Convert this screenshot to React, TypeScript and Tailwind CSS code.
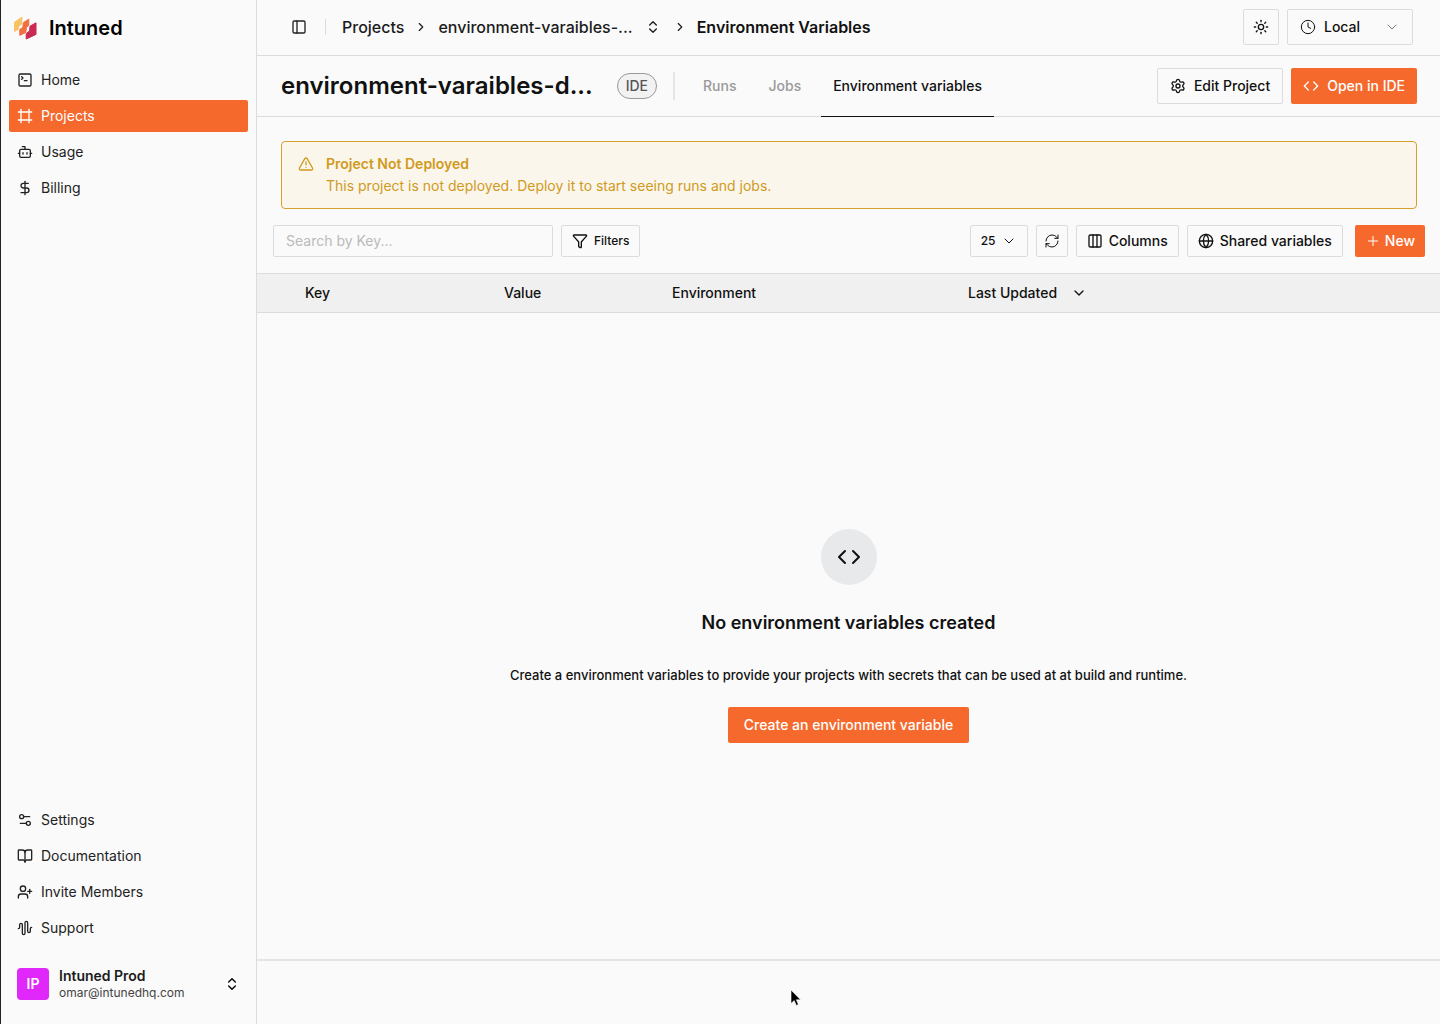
import { useState } from "react";
import {
    AudioWaveform,
    BookOpen,
    Bot,
    ChevronDown,
    ChevronRight,
    ChevronsUpDown,
    Clock,
    Code,
    Columns3,
    DollarSign,
    Frame,
    Funnel,
    Globe,
    LucideIcon,
    PanelLeft,
    Plus,
    RefreshCw,
    Settings,
    Settings2,
    SquareTerminal,
    Sun,
    TriangleAlert,
    UserPlus,
} from "lucide-react";

interface NavLink {
    label: string
    icon: LucideIcon
}

const mainLinks: NavLink[] = [
    { label: 'Home', icon: SquareTerminal },
    { label: 'Projects', icon: Frame },
    { label: 'Usage', icon: Bot },
    { label: 'Billing', icon: DollarSign },
];

const footerLinks: NavLink[] = [
    { label: 'Settings', icon: Settings2 },
    { label: 'Documentation', icon: BookOpen },
    { label: 'Invite Members', icon: UserPlus },
    { label: 'Support', icon: AudioWaveform },
];

const tabs = ['Runs', 'Jobs', 'Environment variables'];

const outlineButton = "flex items-center justify-center rounded-xs border border-[#dcdcdc] font-medium text-[#111111]";
const primaryButton = "flex items-center justify-center rounded-xs bg-[#f5692c] text-sm font-medium text-white";

function Logo() {
    return (
        <svg width="24" height="24" viewBox="0 0 24 24" strokeWidth="1" strokeLinejoin="round">
            <path d="M1.5 6.2 9 1.2 8.6 8.2 5.6 10.2 5.2 13.4 1.5 15.4Z" fill="#f9c263" stroke="#f9c263" />
            <path d="M10.4 6.6 15.8 3.2V9.4L13.4 11.4 12.8 16.4 6.8 19.4V13.4L9.8 11.4Z" fill="#f2703f" stroke="#f2703f" />
            <path d="M17 10.2 23 6.8V18.4L13.2 23V17.6L16.6 15Z" fill="#cb2853" stroke="#cb2853" />
        </svg>
    )
}

function NavList({ links, active }: { links: NavLink[], active?: string }) {
    return (
        <ul className="flex flex-col gap-1">
            {links.map(({ label, icon: Icon }) => (
                <li key={label}>
                    <a
                        href="#"
                        className={`flex h-8 items-center gap-2 rounded-xs px-2 text-sm ${label === active ? 'bg-[#f5692c] text-white' : 'text-[#222222]'}`}
                    >
                        <Icon size={16} />
                        {label}
                    </a>
                </li>
            ))}
        </ul>
    )
}

function Sidebar() {
    return (
        <aside className="flex w-64 shrink-0 flex-col justify-between border-r border-[#dcdcdc] px-2 pt-4 pb-4">
            <div>
                <a href="#" className="mb-6 flex h-6 items-center gap-3 pl-1 text-xl font-semibold text-black">
                    <Logo />
                    Intuned
                </a>
                <NavList links={mainLinks} active="Projects" />
            </div>
            <div>
                <NavList links={footerLinks} />
                <button className="mt-4 flex h-12 w-full items-center px-2 text-left">
                    <span className="flex size-8 items-center justify-center rounded-sm bg-[#e028fa] text-sm font-semibold text-white">IP</span>
                    <span className="ml-2.5 flex-1">
                        <span className="block text-sm leading-[18px] font-semibold text-[#1c1c1c]">Intuned Prod</span>
                        <span className="block text-xs leading-4 text-[#444444]">omar@intunedhq.com</span>
                    </span>
                    <ChevronsUpDown size={16} />
                </button>
            </div>
        </aside>
    )
}

function TopBar() {
    return (
        <header className="flex h-14 items-center justify-between border-b border-[#dcdcdc] pr-[27px] pb-px pl-[34px]">
            <div className="flex items-center">
                <button aria-label="Toggle sidebar" className="text-[#222222]">
                    <PanelLeft size={16} />
                </button>
                <span className="ml-[18px] h-4 w-px bg-[#dcdcdc]" />
                <nav className="ml-4 flex items-center font-medium text-[#1c1c1c]">
                    <a href="#">Projects</a>
                    <ChevronRight size={14} className="mx-2.5" />
                    <button className="flex items-center gap-3">
                        environment-varaibles-...
                        <ChevronsUpDown size={16} />
                    </button>
                    <ChevronRight size={14} className="mr-2.5 ml-3" />
                    <span className="font-semibold text-[#111111]">Environment Variables</span>
                </nav>
            </div>
            <div className="flex gap-2">
                <button aria-label="Toggle theme" className={`${outlineButton} size-9`}>
                    <Sun size={16} />
                </button>
                <label className={`${outlineButton} h-9 w-[126px] gap-2 px-3 text-sm`}>
                    <Clock size={16} strokeWidth={1.5} className="shrink-0" />
                    <select aria-label="Time zone" className="min-w-0 flex-1 appearance-none outline-none">
                        <option>Local</option>
                        <option>UTC</option>
                    </select>
                    <ChevronDown size={16} strokeWidth={1.5} className="shrink-0 text-[#777777]" />
                </label>
            </div>
        </header>
    )
}

function ProjectBar() {
    const [activeTab, setActiveTab] = useState('Environment variables');

    return (
        <div className="flex h-[61px] items-center justify-between border-b border-[#dcdcdc] pr-[23px] pl-6">
            <div className="flex h-full items-center">
                <h1 className="text-2xl font-semibold text-[#111111]">environment-varaibles-d...</h1>
                <span className="ml-6 rounded-full border border-[#999999] bg-[#f2f2f2] px-2 py-0.5 text-sm font-medium text-[#555555]">IDE</span>
                <span className="mx-4 h-7 w-0.5 bg-[#e5e5e5]" />
                <div role="tablist" className="flex h-[61px] gap-2">
                    {tabs.map((tab) => (
                        <button
                            key={tab}
                            role="tab"
                            aria-selected={tab === activeTab}
                            onClick={() => setActiveTab(tab)}
                            className={`border-b px-3 text-sm font-medium ${tab === activeTab ? 'border-[#111111] text-[#111111]' : 'border-transparent text-[#999999]'}`}
                        >
                            {tab}
                        </button>
                    ))}
                </div>
            </div>
            <div className="flex gap-2">
                <button className={`${outlineButton} h-9 gap-2 px-3 text-sm`}>
                    <Settings size={16} />
                    Edit Project
                </button>
                <button className={`${primaryButton} h-9 gap-2 px-3`}>
                    <Code size={16} />
                    Open in IDE
                </button>
            </div>
        </div>
    )
}

function Toolbar() {
    const [search, setSearch] = useState('');

    return (
        <div className="mt-4 mr-[15px] mb-4 ml-4 flex items-center justify-between">
            <div className="flex gap-2">
                <input
                    className="h-8 w-[280px] rounded-xs border border-[#dcdcdc] px-3 pb-0.5 text-sm outline-none placeholder:text-[#bbbbbb]"
                    type="text"
                    aria-label="Search by Key"
                    placeholder="Search by Key..."
                    value={search}
                    onChange={(e) => setSearch(e.target.value)}
                />
                <button className={`${outlineButton} h-8 gap-1.5 px-2.5 text-xs`}>
                    <Funnel size={16} />
                    Filters
                </button>
            </div>
            <div className="flex gap-2">
                <label className={`${outlineButton} h-8 w-[58px] gap-1 px-2.5 text-xs`}>
                    <select aria-label="Rows per page" className="min-w-0 flex-1 appearance-none outline-none">
                        <option>25</option>
                        <option>50</option>
                        <option>100</option>
                    </select>
                    <ChevronDown size={16} strokeWidth={1.5} className="shrink-0" />
                </label>
                <button aria-label="Refresh" className={`${outlineButton} size-8`}>
                    <RefreshCw size={16} strokeWidth={1.5} />
                </button>
                <button className={`${outlineButton} h-8 gap-1.5 px-2.5 text-sm`}>
                    <Columns3 size={16} />
                    Columns
                </button>
                <button className={`${outlineButton} h-8 gap-1.5 px-2.5 text-sm`}>
                    <Globe size={16} />
                    Shared variables
                </button>
                <button className={`${primaryButton} ml-1 h-8 gap-1 px-2.5`}>
                    <Plus size={16} strokeWidth={1.5} />
                    New
                </button>
            </div>
        </div>
    )
}

export default function App() {
    return (
        <div className="flex min-h-screen border-l border-[#222222] bg-[#fafafa] font-['Inter',sans-serif]">
            <Sidebar />
            <main className="flex min-w-0 flex-1 flex-col">
                <TopBar />
                <ProjectBar />
                <div role="alert" className="mt-6 mr-[23px] ml-6 flex gap-3 rounded-sm border border-[#d6a02c] bg-[#faf6ec] px-4 py-3 text-sm text-[#d19a1c]">
                    <TriangleAlert size={16} className="mt-0.5" />
                    <div>
                        <p className="leading-5 font-semibold">Project Not Deployed</p>
                        <p className="mt-0.5 leading-5">This project is not deployed. Deploy it to start seeing runs and jobs.</p>
                    </div>
                </div>
                <Toolbar />
                <table className="w-full table-fixed text-left text-sm">
                    <thead>
                        <tr className="h-[39px] border-y border-[#dcdcdc] bg-[#f0f0f0] text-[#111111]">
                            <th className="w-[231px] pl-12 font-medium">Key</th>
                            <th className="w-[168px] pl-4 font-medium">Value</th>
                            <th className="w-[296px] pl-4 font-medium">Environment</th>
                            <th className="pl-4 font-medium">
                                <button className="flex items-center gap-3.5">
                                    Last Updated
                                    <ChevronDown size={16} />
                                </button>
                            </th>
                        </tr>
                    </thead>
                </table>
                <div className="flex flex-1 flex-col items-center justify-center text-[#111111]">
                    <div className="flex size-14 items-center justify-center rounded-full bg-[#e8e9eb]">
                        <Code size={24} />
                    </div>
                    <h2 className="mt-6 text-lg leading-7 font-semibold">No environment variables created</h2>
                    <p className="mt-7 text-[13px] leading-5 font-medium">
                        Create a environment variables to provide your projects with secrets that can be used at at build and runtime.
                    </p>
                    <button className={`${primaryButton} mt-[22px] h-9 px-4`}>Create an environment variable</button>
                </div>
                <footer className="h-[65px] border-t-2 border-[#e5e5e5]" />
            </main>
            <svg className="pointer-events-none absolute top-[989px] left-[790px]" width="12" height="18" viewBox="0 0 12 18">
                <path d="M1 1V14.5L4.2 11.6 6.3 16.4 8.4 15.5 6.4 10.8H10.6Z" fill="#000000" stroke="#ffffff" strokeWidth="0.6" />
            </svg>
        </div>
    )
}
